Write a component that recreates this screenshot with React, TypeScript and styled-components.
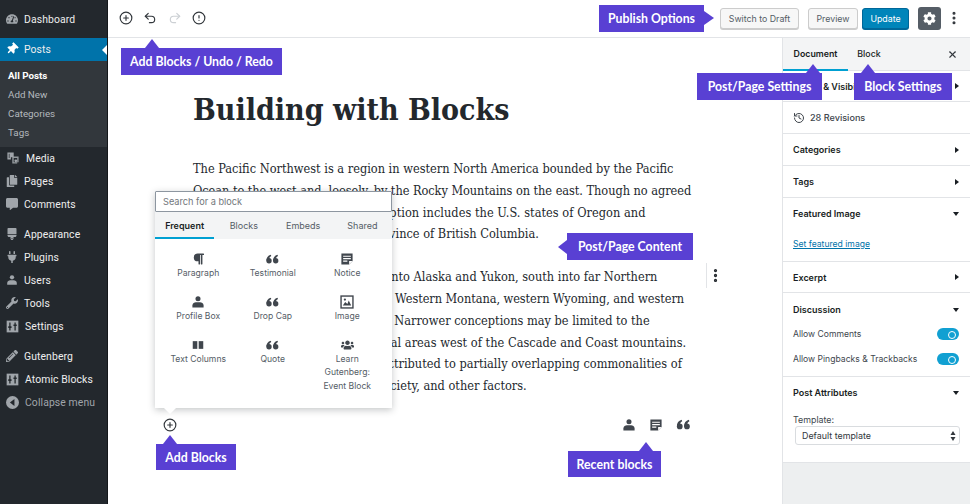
import React from 'react';
import styled, { createGlobalStyle, css } from 'styled-components';
import { CircleAlert, CirclePlus, EllipsisVertical, History, Redo2, Undo2, X } from 'lucide-react';
import {
  FaBrush,
  FaCog,
  FaCommentAlt,
  FaCopy,
  FaParagraph,
  FaPencilAlt,
  FaPlug,
  FaTachometerAlt,
  FaThumbtack,
  FaUsers,
  FaWrench,
} from 'react-icons/fa';

const GlobalStyle = createGlobalStyle`
  html, body {
    margin: 0;
    padding: 0;
    background: #fff;
    font-family: "Inter", "Liberation Sans", sans-serif;
  }
  * { box-sizing: border-box; }
`;

const Page = styled.div`
  position: relative;
  display: grid;
  grid-template-columns: 108px 1fr;
  width: 970px;
  height: 504px;
  overflow: hidden;
`;

/* left admin menu */
const Sidebar = styled.nav`
  background: #23282d;
  border-right: 1px solid #14171a;
  padding-top: 8px;
`;

const MenuItem = styled.div<{ $active?: boolean; $dim?: boolean; $gap?: boolean }>`
  position: relative;
  display: flex;
  align-items: center;
  gap: 6px;
  height: 23px;
  padding: 0 0 1px 6px;
  font-family: "Roboto", sans-serif;
  font-size: 10.4px;
  letter-spacing: 0.1px;
  color: ${(p) => (p.$dim ? '#a0a5aa' : '#eeeeee')};
  background: ${(p) => (p.$active ? '#0073aa' : 'transparent')};
  margin-bottom: ${(p) => (p.$gap ? '7px' : '0')};
  svg {
    flex: none;
    color: ${(p) => (p.$active ? '#fff' : '#a0a5aa')};
  }
  ${(p) =>
    p.$active &&
    css`
      &::after {
        content: '';
        position: absolute;
        right: 0;
        top: 7px;
        border: 5px solid transparent;
        border-left: 0;
        border-right-color: #fff;
      }
    `}
`;

const PinIcon = styled(FaThumbtack)`
  transform: rotate(45deg);
`;

const SubMenu = styled.div`
  background: #32373c;
  padding: 5px 0;
`;

const SubItem = styled.div<{ $current?: boolean }>`
  height: 19px;
  line-height: 19px;
  padding-left: 8px;
  font-family: "Roboto", sans-serif;
  font-size: 9.8px;
  font-weight: ${(p) => (p.$current ? 700 : 400)};
  color: ${(p) => (p.$current ? '#fff' : '#b4b9be')};
`;

const Main = styled.div`
  display: grid;
  grid-template-rows: 38px 1fr;
  min-width: 0;
`;

/* top toolbar */
const TopBar = styled.header`
  display: flex;
  align-items: center;
  justify-content: space-between;
  border-bottom: 1px solid #e2e4e7;
  padding: 0 8px 1px 11px;
`;

const ToolGroup = styled.div`
  display: flex;
  align-items: center;
  gap: 10.4px;
  color: #32373c;
`;

const Btn = styled.div<{ $primary?: boolean; $w: number; $mr?: number }>`
  display: flex;
  align-items: center;
  justify-content: center;
  width: ${(p) => p.$w}px;
  height: 21px;
  margin-right: ${(p) => p.$mr ?? 0}px;
  border-radius: 3px;
  font-size: 8.8px;
  color: ${(p) => (p.$primary ? '#fff' : '#555d66')};
  background: ${(p) => (p.$primary ? '#0085ba' : '#f7f7f7')};
  border: 1px solid ${(p) => (p.$primary ? '#006799' : '#ccc')};
  box-shadow: 0 1px 0 ${(p) => (p.$primary ? '#006799' : '#ccc')};
`;

const GearBtn = styled.div`
  display: flex;
  align-items: center;
  justify-content: center;
  width: 23px;
  height: 23px;
  margin: 0 5px 0 -1px;
  border-radius: 3px;
  background: #555d66;
  color: #fff;
`;

const ActionGroup = styled.div`
  display: flex;
  align-items: center;
  color: #32373c;
`;

const Body = styled.div`
  display: grid;
  grid-template-columns: 1fr 188px;
  min-height: 0;
`;

/* post content */
const Editor = styled.main`
  padding: 52px 0 0 85px;
  color: #23282d;
  font-family: "DejaVu Serif", serif;
  font-stretch: condensed;
`;

const Title = styled.h1`
  margin: 0 0 28px;
  font-size: 30px;
  line-height: 40px;
  font-weight: 700;
  white-space: nowrap;
`;

const Paragraph = styled.p`
  margin: 0 0 21px;
  font-size: 12.65px;
  line-height: 21.8px;
`;

const Line = styled.span<{ $track?: number }>`
  display: block;
  white-space: nowrap;
  letter-spacing: ${(p) => p.$track ?? 0}px;
`;

const RecentRow = styled.div`
  display: flex;
  align-items: center;
  justify-content: space-between;
  width: 528px;
  height: 20px;
  margin: -3px 0 0 -30px;
  color: #32373c;
`;

const RecentIcons = styled.div`
  display: flex;
  align-items: center;
  gap: 13px;
  color: #40464d;
`;

const BlockMenu = styled.div`
  position: absolute;
  left: 706px;
  top: 263px;
  display: flex;
  align-items: center;
  height: 25px;
  border-left: 1px solid #e2e4e7;
  color: #23282d;
`;

/* block inserter popover */
const Inserter = styled.div`
  position: absolute;
  left: 155px;
  top: 191px;
  width: 237px;
  height: 217px;
  background: #fff;
  box-shadow: 0 2px 7px rgba(25, 30, 35, 0.25);
  &::after {
    content: '';
    position: absolute;
    left: 9px;
    bottom: -6px;
    border: 6px solid transparent;
    border-bottom: 0;
    border-top-color: #fff;
  }
`;

const Search = styled.input`
  display: block;
  width: 100%;
  height: 21px;
  padding: 0 7px;
  border: 1px solid #8d96a0;
  border-radius: 1px;
  outline: 0;
  font-family: inherit;
  font-size: 9.2px;
  background: #fff;
  &::placeholder {
    color: #72777c;
    opacity: 1;
  }
`;

const InserterTabs = styled.div`
  display: grid;
  grid-template-columns: repeat(4, 1fr);
  height: 27px;
  background: #f3f4f5;
`;

const InserterTab = styled.div<{ $active?: boolean }>`
  display: flex;
  align-items: center;
  justify-content: center;
  padding-top: 1px;
  font-size: 9px;
  font-weight: ${(p) => (p.$active ? 600 : 400)};
  color: ${(p) => (p.$active ? '#191e23' : '#555d66')};
  border-bottom: 2px solid ${(p) => (p.$active ? '#00a0d2' : 'transparent')};
`;

const BlockGrid = styled.div`
  display: grid;
  grid-template-columns: repeat(3, 74.5px);
  grid-auto-rows: 43px;
  padding: 13px 6px 0 6px;
`;

const BlockItem = styled.div`
  display: flex;
  flex-direction: column;
  align-items: center;
  color: #555d66;
  text-align: center;
  svg {
    flex: none;
    height: 14px;
    color: #40464d;
  }
`;

const BlockLabel = styled.span`
  margin-top: 1px;
  font-size: 8.6px;
  line-height: 13.4px;
`;

/* settings panel */
const Settings = styled.aside`
  border-left: 1px solid #e2e4e7;
  background: #edeff0;
  min-height: 0;
`;

const SettingsTabs = styled.div`
  display: flex;
  align-items: stretch;
  height: 33px;
  background: #f3f4f5;
  border-bottom: 1px solid #e2e4e7;
`;

const SettingsTab = styled.div<{ $active?: boolean; $w: number }>`
  display: flex;
  align-items: center;
  justify-content: center;
  width: ${(p) => p.$w}px;
  font-size: 8.8px;
  font-weight: ${(p) => (p.$active ? 600 : 500)};
  color: #191e23;
  border-bottom: 2px solid ${(p) => (p.$active ? '#00a0d2' : 'transparent')};
  margin-bottom: -1px;
`;

const CloseBtn = styled.div`
  display: flex;
  align-items: center;
  margin-left: auto;
  padding-right: 12px;
  color: #32373c;
`;

const Section = styled.section<{ $pad?: number }>`
  background: #fff;
  border-bottom: 1px solid #e2e4e7;
  padding: 0 10px ${(p) => p.$pad ?? 0}px 10px;
`;

const SectionHead = styled.div<{ $h?: number }>`
  display: flex;
  align-items: center;
  justify-content: space-between;
  height: ${(p) => p.$h ?? 31}px;
  font-size: 9px;
  font-weight: 600;
  color: #191e23;
`;

const Arrow = styled.span<{ $open?: boolean }>`
  width: 0;
  height: 0;
  margin-right: 1px;
  border-style: solid;
  ${(p) =>
    p.$open
      ? css`
          border-width: 4px 3.5px 0;
          border-color: #191e23 transparent transparent;
        `
      : css`
          border-width: 3.5px 0 3.5px 4px;
          border-color: transparent transparent transparent #191e23;
        `}
`;

const Revisions = styled.div`
  display: flex;
  align-items: center;
  gap: 5px;
  height: 31px;
  font-size: 9.1px;
  font-weight: 500;
  color: #40464d;
`;

const LinkText = styled.a`
  display: block;
  margin-top: 7px;
  font-size: 8.6px;
  line-height: 16px;
  color: #0073aa;
  text-decoration: underline;
`;

const ToggleList = styled.div`
  margin-top: -2px;
`;

const ToggleRow = styled.div`
  display: flex;
  align-items: center;
  justify-content: space-between;
  height: 20px;
  margin-bottom: 5px;
  font-size: 8.6px;
  color: #40464d;
`;

const Toggle = styled.span`
  position: relative;
  width: 22px;
  height: 12px;
  margin-right: 1px;
  border-radius: 6px;
  background: #11a0d2;
  &::after {
    content: '';
    position: absolute;
    right: 3px;
    top: 3px;
    width: 6px;
    height: 6px;
    border: 1.5px solid #fff;
    border-radius: 50%;
  }
`;

const FieldLabel = styled.div`
  margin-top: 5px;
  font-size: 8.9px;
  line-height: 14px;
  color: #40464d;
`;

const SelectBox = styled.div`
  display: flex;
  align-items: center;
  justify-content: space-between;
  height: 19px;
  margin: -1px 0 0 2px;
  padding: 0 2px 0 6px;
  border: 1px solid #d9dcdf;
  border-radius: 3px;
  font-size: 8.9px;
  color: #32373c;
  background: #fff;
`;

/* purple annotation labels */
const Callout = styled.div<{
  $x: number;
  $y: number;
  $w: number;
  $h?: number;
  $side: 'top' | 'left' | 'right';
  $tip?: number;
}>`
  position: absolute;
  left: ${(p) => p.$x}px;
  top: ${(p) => p.$y}px;
  width: ${(p) => p.$w}px;
  height: ${(p) => p.$h ?? 27}px;
  display: flex;
  align-items: center;
  justify-content: center;
  background: #5940d3;
  color: #fff;
  font-family: "Lato", sans-serif;
  font-size: 12.3px;
  font-weight: 700;
  white-space: nowrap;
  &::after {
    content: '';
    position: absolute;
    border: 0 solid transparent;
    ${(p) =>
      p.$side === 'top' &&
      css`
        left: ${p.$tip}px;
        top: -9px;
        border-width: 0 7px 9px;
        border-bottom-color: #5940d3;
      `}
    ${(p) =>
      p.$side === 'left' &&
      css`
        left: -9px;
        top: 7px;
        border-width: 7px 9px 7px 0;
        border-right-color: #5940d3;
      `}
    ${(p) =>
      p.$side === 'right' &&
      css`
        right: -10px;
        top: 6px;
        border-width: 7px 0 7px 10px;
        border-left-color: #5940d3;
      `}
  }
`;

/* dashicon style drawings */
const MediaIcon = () => (
  <svg width="14" height="14" viewBox="0 0 20 20" fill="currentColor">
    <path d="M2 2h9v7H7v3H2z" />
    <path d="M9 8h9v8h-2v2H9z" fillOpacity="0.9" />
    <path d="M4 4v6h1V4z" fill="#23282d" />
    <path d="M11 10v6h5v-6z" fill="#23282d" />
    <circle cx="14" cy="14" r="2" />
  </svg>
);

const SlidersIcon = () => (
  <svg width="13" height="13" viewBox="0 0 20 20">
    <rect x="1" y="1" width="18" height="18" fill="currentColor" />
    <path d="M6 4v12M14 4v12" stroke="#23282d" strokeWidth="2" />
    <path d="M3.5 11h5M11.5 8h5" stroke="#23282d" strokeWidth="2.5" />
  </svg>
);

const CollapseIcon = () => (
  <svg width="13" height="13" viewBox="0 0 20 20">
    <circle cx="10" cy="10" r="10" fill="currentColor" />
    <path d="M13 4.5v11L6 10z" fill="#23282d" />
  </svg>
);

const UserIcon = ({ size = 14 }: { size?: number }) => (
  <svg width={size} height={size} viewBox="0 0 20 20" fill="currentColor">
    <circle cx="10" cy="5.5" r="3.6" />
    <path d="M2 18v-3c0-3 3-4.500 5-4.500h6c2 0 5 1.500 5 4.500v3z" />
  </svg>
);

const QuoteIcon = ({ size = 15 }: { size?: number }) => (
  <svg width={size} height={size} viewBox="0 0 20 20" fill="currentColor">
    <circle cx="5" cy="12.500" r="3.800" />
    <path d="M1.200 12.500C1 8 3.500 5 7.500 3.800L8.300 5.600C6 6.800 5 8.600 5.400 10.500z" />
    <circle cx="14.600" cy="12.500" r="3.800" />
    <path d="M10.800 12.500C10.600 8 13.100 5 17.100 3.800L17.900 5.600C15.600 6.800 14.600 8.600 15 10.500z" />
  </svg>
);

const NoticeIcon = ({ size = 14 }: { size?: number }) => (
  <svg width={size} height={size} viewBox="0 0 20 20">
    <path d="M2 2h16v11l-5 5H2z" fill="currentColor" />
    <path d="M4.500 6h11M4.500 9.500h11M4.500 13h6" stroke="#fff" strokeWidth="1.600" />
    <path d="M13 18v-5h5z" fill="#fff" />
  </svg>
);

const ImageIcon = () => (
  <svg width="14" height="14" viewBox="0 0 20 20">
    <rect x="1.500" y="1.500" width="17" height="17" fill="#fff" stroke="currentColor" strokeWidth="2" />
    <path d="M4 15l3.500-5 3 3 2-5L16 15z" fill="currentColor" />
    <circle cx="7" cy="6.500" r="1.600" fill="currentColor" />
  </svg>
);

const ColumnsIcon = () => (
  <svg width="14" height="14" viewBox="0 0 20 20" fill="currentColor">
    <rect x="2.500" y="4.500" width="6.500" height="11" />
    <rect x="11" y="4.500" width="6.500" height="11" />
  </svg>
);

const mainMenu: { label: string; icon: React.ReactNode; gap?: boolean }[] = [
  { label: 'Media', icon: <MediaIcon /> },
  { label: 'Pages', icon: <FaCopy size={12} /> },
  { label: 'Comments', icon: <FaCommentAlt size={12} />, gap: true },
  { label: 'Appearance', icon: <FaBrush size={12} /> },
  { label: 'Plugins', icon: <FaPlug size={12} /> },
  { label: 'Users', icon: <UserIcon size={12} /> },
  { label: 'Tools', icon: <FaWrench size={12} /> },
  { label: 'Settings', icon: <SlidersIcon />, gap: true },
  { label: 'Gutenberg', icon: <FaPencilAlt size={12} /> },
  { label: 'Atomic Blocks', icon: <SlidersIcon /> },
];

const blocks: { label: React.ReactNode; icon: React.ReactNode }[] = [
  { label: 'Paragraph', icon: <FaParagraph size={11} /> },
  { label: 'Testimonial', icon: <QuoteIcon /> },
  { label: 'Notice', icon: <NoticeIcon /> },
  { label: 'Profile Box', icon: <UserIcon /> },
  { label: 'Drop Cap', icon: <QuoteIcon /> },
  { label: 'Image', icon: <ImageIcon /> },
  { label: 'Text Columns', icon: <ColumnsIcon /> },
  { label: 'Quote', icon: <QuoteIcon /> },
  {
    label: (
      <>
        Learn
        <br />
        Gutenberg:
        <br />
        Event Block
      </>
    ),
    icon: <FaUsers size={13} />,
  },
];

const firstParagraph: { text: string; track?: number }[] = [
  { text: 'The Pacific Northwest is a region in western North America bounded by the Pacific' },
  { text: 'Ocean to the west and, loosely, by the Rocky Mountains on the east. Though no agreed', track: -0.04 },
  { text: 'boundary exists, a common conception includes the U.S. states of Oregon and', track: 0.04 },
  { text: 'Washington and the Canadian province of British Columbia.' },
];

const secondParagraph: { text: string; track?: number }[] = [
  { text: 'Broader conceptions reach north into Alaska and Yukon, south into far Northern' },
  { text: 'California, and east to also include Western Montana, western Wyoming, and western', track: -0.06 },
  { text: 'Idaho and part of the Great Basin. Narrower conceptions may be limited to the' },
  { text: 'to the Pacific Ocean and the coastal areas west of the Cascade and Coast mountains.', track: 0.03 },
  { text: 'The variety of definitions can be attributed to partially overlapping commonalities of' },
  { text: "the region's geography, history, society, and other factors." },
];

const App: React.FC = () => {
  return (
    <Page>
      <GlobalStyle />
      <Sidebar>
        <MenuItem $gap>
          <FaTachometerAlt size={12} />
          Dashboard
        </MenuItem>
        <MenuItem $active>
          <PinIcon size={12} />
          Posts
        </MenuItem>
        <SubMenu>
          <SubItem $current>All Posts</SubItem>
          <SubItem>Add New</SubItem>
          <SubItem>Categories</SubItem>
          <SubItem>Tags</SubItem>
        </SubMenu>
        {mainMenu.map((item) => (
          <MenuItem key={item.label} $gap={item.gap}>
            {item.icon}
            {item.label}
          </MenuItem>
        ))}
        <MenuItem $dim>
          <CollapseIcon />
          Collapse menu
        </MenuItem>
      </Sidebar>

      <Main>
        <TopBar>
          <ToolGroup>
            <CirclePlus size={14} strokeWidth={2} />
            <Undo2 size={14} strokeWidth={2} />
            <Redo2 size={14} strokeWidth={2} color="#ccd0d4" />
            <CircleAlert size={14} strokeWidth={2} />
          </ToolGroup>
          <ActionGroup>
            <Btn $w={79} $mr={9}>Switch to Draft</Btn>
            <Btn $w={50} $mr={4}>Preview</Btn>
            <Btn $w={47} $mr={10} $primary>Update</Btn>
            <GearBtn>
              <FaCog size={13} />
            </GearBtn>
            <EllipsisVertical size={16} strokeWidth={2.6} />
          </ActionGroup>
        </TopBar>

        <Body>
          <Editor>
            <Title>Building with Blocks</Title>
            <Paragraph>
              {firstParagraph.map((line) => (
                <Line key={line.text} $track={line.track}>{line.text}</Line>
              ))}
            </Paragraph>
            <Paragraph>
              {secondParagraph.map((line) => (
                <Line key={line.text} $track={line.track}>{line.text}</Line>
              ))}
            </Paragraph>
            <RecentRow>
              <CirclePlus size={14} strokeWidth={2} />
              <RecentIcons>
                <UserIcon />
                <NoticeIcon />
                <QuoteIcon />
              </RecentIcons>
            </RecentRow>
          </Editor>

          <Settings>
            <SettingsTabs>
              <SettingsTab $active $w={65}>Document</SettingsTab>
              <SettingsTab $w={42}>Block</SettingsTab>
              <CloseBtn>
                <X size={11} strokeWidth={2.4} />
              </CloseBtn>
            </SettingsTabs>
            <Section>
              <SectionHead $h={30}>
                Status &amp; Visibility
                <Arrow />
              </SectionHead>
            </Section>
            <Section>
              <Revisions>
                <History size={12} strokeWidth={2} />
                28 Revisions
              </Revisions>
            </Section>
            <Section>
              <SectionHead>
                Categories
                <Arrow />
              </SectionHead>
            </Section>
            <Section>
              <SectionHead>
                Tags
                <Arrow />
              </SectionHead>
            </Section>
            <Section $pad={9}>
              <SectionHead>
                Featured Image
                <Arrow $open />
              </SectionHead>
              <LinkText>Set featured image</LinkText>
            </Section>
            <Section>
              <SectionHead $h={30}>
                Excerpt
                <Arrow />
              </SectionHead>
            </Section>
            <Section $pad={2}>
              <SectionHead $h={33}>
                Discussion
                <Arrow $open />
              </SectionHead>
              <ToggleList>
                <ToggleRow>
                  Allow Comments
                  <Toggle />
                </ToggleRow>
                <ToggleRow>
                  Allow Pingbacks &amp; Trackbacks
                  <Toggle />
                </ToggleRow>
              </ToggleList>
            </Section>
            <Section $pad={17}>
              <SectionHead>
                Post Attributes
                <Arrow $open />
              </SectionHead>
              <FieldLabel>Template:</FieldLabel>
              <SelectBox>
                Default template
                <svg width="8" height="12" viewBox="0 0 8 12" fill="#32373c">
                  <path d="M4 1l2.500 4h-5zM4 11L1.500 7h5z" />
                </svg>
              </SelectBox>
            </Section>
          </Settings>
        </Body>
      </Main>

      <BlockMenu>
        <EllipsisVertical size={17} strokeWidth={2.6} />
      </BlockMenu>

      <Inserter>
        <Search placeholder="Search for a block" readOnly />
        <InserterTabs>
          <InserterTab $active>Frequent</InserterTab>
          <InserterTab>Blocks</InserterTab>
          <InserterTab>Embeds</InserterTab>
          <InserterTab>Shared</InserterTab>
        </InserterTabs>
        <BlockGrid>
          {blocks.map((block, i) => (
            <BlockItem key={i}>
              {block.icon}
              <BlockLabel>{block.label}</BlockLabel>
            </BlockItem>
          ))}
        </BlockGrid>
      </Inserter>

      <Callout $x={121} $y={48} $w={161} $side="top" $tip={24}>Add Blocks / Undo / Redo</Callout>
      <Callout $x={599} $y={5} $w={105} $side="right">Publish Options</Callout>
      <Callout $x={697} $y={73} $w={125} $side="top" $tip={109}>Post/Page Settings</Callout>
      <Callout $x={854} $y={73} $w={98} $side="top" $tip={7}>Block Settings</Callout>
      <Callout $x={567} $y={233} $w={126} $side="left">Post/Page Content</Callout>
      <Callout $x={156} $y={444} $w={80} $h={26} $side="top" $tip={7}>Add Blocks</Callout>
      <Callout $x={568} $y={451} $w={93} $h={26} $side="top" $tip={71}>Recent blocks</Callout>
    </Page>
  );
};

export default App;
